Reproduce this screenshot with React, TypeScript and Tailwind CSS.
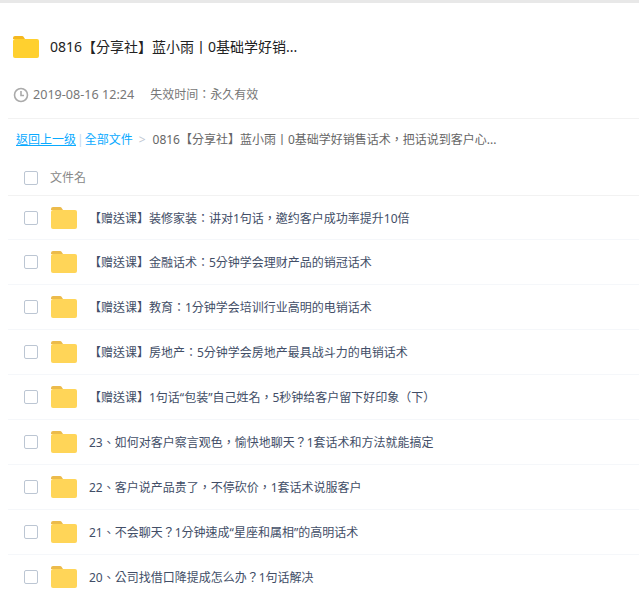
const FILES = [
  "【赠送课】装修家装：讲对1句话，邀约客户成功率提升10倍",
  "【赠送课】金融话术：5分钟学会理财产品的销冠话术",
  "【赠送课】教育：1分钟学会培训行业高明的电销话术",
  "【赠送课】房地产：5分钟学会房地产最具战斗力的电销话术",
  "【赠送课】1句话“包装”自己姓名，5秒钟给客户留下好印象（下）",
  "23、如何对客户察言观色，愉快地聊天？1套话术和方法就能搞定",
  "22、客户说产品贵了，不停砍价，1套话术说服客户",
  "21、不会聊天？1分钟速成“星座和属相”的高明话术",
  "20、公司找借口降提成怎么办？1句话解决",
];

function FolderIcon({ large }: { large?: boolean }) {
  return (
    <svg width="26" height="22" viewBox="0 0 26 22" className="block shrink-0">
      <path d="M0 2a2 2 0 0 1 2-2h7a2 2 0 0 1 2 1.5L12 3H0z" fill={large ? "#f5b81f" : "#ecbb4b"} />
      <rect x="0" y="3" width="26" height="19" rx="2" fill={large ? "#ffd02f" : "#ffd558"} />
    </svg>
  );
}

function Checkbox() {
  return <span className="h-[14px] w-[14px] shrink-0 rounded-[2px] border border-[#bcc6d3] bg-white" />;
}

export default function App() {
  return (
    <div className="h-[592px] w-[639px] overflow-hidden bg-white font-['Noto_Sans','Noto_Sans_CJK_TC',sans-serif]">
      <div className="h-[3px] bg-[#e8e8e8]" />
      <div className="flex h-[56px] items-end pl-[13px]">
        <div className="flex items-center gap-[11px]">
          <FolderIcon large />
          <span className="text-[14px] leading-[24px] text-[#222]">0816【分享社】蓝小雨丨0基础学好销...</span>
        </div>
      </div>
      <div className="mt-[24px] flex h-[24px] items-center pl-[13px] text-[#777]">
        <svg width="16" height="16" viewBox="0 0 16 16" className="mr-[4px] shrink-0" fill="none" stroke="#aaa">
          <circle cx="8" cy="8" r="6.5" strokeWidth="1.6" />
          <path d="M8 4v4.5h3" strokeWidth="1.6" />
        </svg>
        <span className="text-[12.6px]">2019-08-16 12:24</span>
        <span className="ml-[16px] text-[12px]">失效时间：永久有效</span>
      </div>
      <div className="ml-[8px] mt-[11px] flex h-[43px] items-center border-t border-[#f2f2f2] pl-[8px] text-[12px]">
        <a className="text-[#09aaff] underline">返回上一级</a>
        <span className="mx-[1px] text-[#c4d8f0]">|</span>
        <a className="text-[#09aaff]">全部文件</a>
        <span className="mx-[6px] text-[#c0c8d2]">&gt;</span>
        <span className="ml-[1px] text-[#666]">0816【分享社】蓝小雨丨0基础学好销售话术，把话说到客户心...</span>
      </div>
      <div className="ml-[8px] flex h-[35px] items-center border-b border-[#f2f2f2] pb-[1px] pl-[16px] text-[12px] text-[#888]">
        <Checkbox />
        <span className="ml-[12px]">文件名</span>
      </div>
      <div>
        {FILES.map((name) => (
          <div key={name} className="ml-[8px] flex h-[45px] items-center border-b border-[#f5f7fa] pl-[16px] first:h-[44px]">
            <Checkbox />
            <span className="ml-[13px]">
              <FolderIcon />
            </span>
            <span className="ml-[12px] pt-[2px] text-[12px] text-[#424e67]">{name}</span>
          </div>
        ))}
      </div>
    </div>
  );
}
